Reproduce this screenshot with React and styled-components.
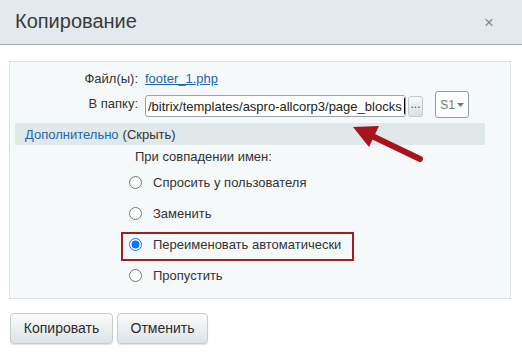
import * as React from "react"
import styled, { createGlobalStyle } from "styled-components"

const GlobalStyle = createGlobalStyle`
  body {
    margin: 0;
    background: #fff;
    font-family: "Liberation Sans", Arial, sans-serif;
    font-size: 13px;
    color: #333;
  }
`

const Dialog = styled.div`
  width: 522px;
  height: 354px;
  overflow: hidden;
`

const Header = styled.header`
  height: 45px;
  background: #e2eaed;
  border-bottom: 1px solid #a7afb2;
  display: flex;
  align-items: center;
  justify-content: space-between;
  padding: 0 28px 0 15px;
  box-sizing: border-box;
`

const Title = styled.h1`
  margin: 0;
  font-size: 20px;
  font-weight: normal;
  color: #3a3a3a;
  padding-bottom: 2px;
`

const Close = styled.span`
  font-size: 17px;
  color: #85898b;
  line-height: 1;
`

const Panel = styled.section`
  position: relative;
  margin: 16px 11px 0 9px;
  height: 238px;
  box-sizing: border-box;
  background: #f5f9f9;
  border: 1px solid #d8e1e3;
  padding-top: 7px;
`

const FormRow = styled.div`
  display: grid;
  grid-template-columns: 128px 1fr;
  column-gap: 7px;
  align-items: center;
  height: ${p => p.$h}px;
  margin-top: ${p => p.$mt || 0}px;
`

const Label = styled.span`
  text-align: right;
  color: #333;
  padding-bottom: ${p => p.$pb || 0}px;
`

const FileLink = styled.a`
  color: #2067b0;
  text-decoration: underline;
`

const FolderControls = styled.div`
  display: flex;
  align-items: center;
`

const PathField = styled.div`
  width: 261px;
  height: 22px;
  box-sizing: border-box;
  border: 1px solid #9aa4aa;
  border-radius: 3px;
  background: #fff;
  display: flex;
  align-items: center;
  padding-left: 2px;
  color: #222;
  white-space: nowrap;
  overflow: hidden;
  margin-top: 3px;
`

const Caret = styled.span`
  display: inline-block;
  width: 1px;
  height: 16px;
  background: #000;
  margin-left: 2px;
`

const DotsButton = styled.button`
  width: 15px;
  height: 21px;
  margin: 4px 0 0 2px;
  padding: 0 0 5px;
  border: 1px solid #c3cbcf;
  border-radius: 3px;
  background: linear-gradient(#f8f9f9, #d9e0e3);
  font: 12px "Liberation Sans", Arial, sans-serif;
  color: #444;
  line-height: 1;
`

const SiteSelect = styled.div`
  width: 34px;
  height: 27px;
  box-sizing: border-box;
  margin-left: 12px;
  border: 1px solid #8e9ca6;
  border-radius: 3px;
  background: #fff;
  display: flex;
  align-items: center;
  justify-content: center;
  gap: 2px;
  color: #6f787e;
  font-size: 12px;
`

const Strip = styled.div`
  margin: 5px 25px 0 5px;
  height: 22px;
  background: #e0e8ea;
  display: flex;
  align-items: center;
  padding-left: 10px;
  color: #333;
`

const StripLink = styled.a`
  color: #2067b0;
  text-decoration: none;
  margin-right: 4px;
`

const GroupTitle = styled.div`
  margin: 4px 0 0 125px;
  line-height: 16px;
  color: #333;
`

const RadioList = styled.div`
  margin-top: 2px;
  padding-left: 119px;
`

const RadioRow = styled.label`
  display: flex;
  align-items: center;
  gap: 11px;
  height: ${p => p.$h || 31}px;
  color: #333;
  box-sizing: border-box;

  ${p => p.$marked && `
    width: 233px;
    margin: 3px 0 0 -8px;
    padding: 0 0 4px 6px;
    border: 2px solid #a31e22;
  `}

  input {
    margin: 0;
    width: 13px;
    height: 13px;
    accent-color: #0075ff;
  }
`

const Arrow = styled.svg`
  position: absolute;
  left: 330px;
  top: 55px;
  pointer-events: none;
`

const Footer = styled.footer`
  display: flex;
  gap: 4px;
  margin: 14px 0 0 10px;
`

const Button = styled.button`
  width: ${p => p.$w}px;
  height: 31px;
  border: 1px solid #c6cdd0;
  border-radius: 4px;
  background: linear-gradient(#fbfcfc, #dde3e5);
  box-shadow: 0 1px 1px rgba(0, 0, 0, 0.12);
  font: 14px "Liberation Sans", Arial, sans-serif;
  color: #2b2b2b;
  padding: 0 0 1px;
`

const options = [
  "Спросить у пользователя",
  "Заменить",
  "Переименовать автоматически",
  "Пропустить",
]

export default function App() {
  return (
    <Dialog>
      <GlobalStyle />
      <Header>
        <Title>Копирование</Title>
        <Close>×</Close>
      </Header>
      <Panel>
        <FormRow $h={18}>
          <Label>Файл(ы):</Label>
          <span>
            <FileLink href="#">footer_1.php</FileLink>
          </span>
        </FormRow>
        <FormRow $h={27} $mt={4}>
          <Label $pb={3}>В папку:</Label>
          <FolderControls>
            <PathField>
              /bitrix/templates/aspro-allcorp3/page_blocks
              <Caret />
            </PathField>
            <DotsButton>...</DotsButton>
            <SiteSelect>
              S1
              <svg width="7" height="4" viewBox="0 0 7 4">
                <path d="M0 0h7L3.5 4z" fill="#6f787e" />
              </svg>
            </SiteSelect>
          </FolderControls>
        </FormRow>
        <Strip>
          <StripLink href="#">Дополнительно</StripLink>
          (Скрыть)
        </Strip>
        <GroupTitle>При совпадении имен:</GroupTitle>
        <RadioList>
          {options.map((text, i) => (
            <RadioRow
              key={text}
              $marked={i === 2}
              $h={i === 2 ? 29 : i === 3 ? 28 : 31}
            >
              <input type="radio" name="dup" readOnly checked={i === 2} />
              {text}
            </RadioRow>
          ))}
        </RadioList>
        <Arrow width="95" height="50" viewBox="0 0 95 50">
          <path d="M80 42 L30 18" stroke="#a8141b" strokeWidth="6" strokeLinecap="round" />
          <path d="M13 10 L39 9 L29 30 Z" fill="#a8141b" />
        </Arrow>
      </Panel>
      <Footer>
        <Button $w={103}>Копировать</Button>
        <Button $w={91}>Отменить</Button>
      </Footer>
    </Dialog>
  )
}
